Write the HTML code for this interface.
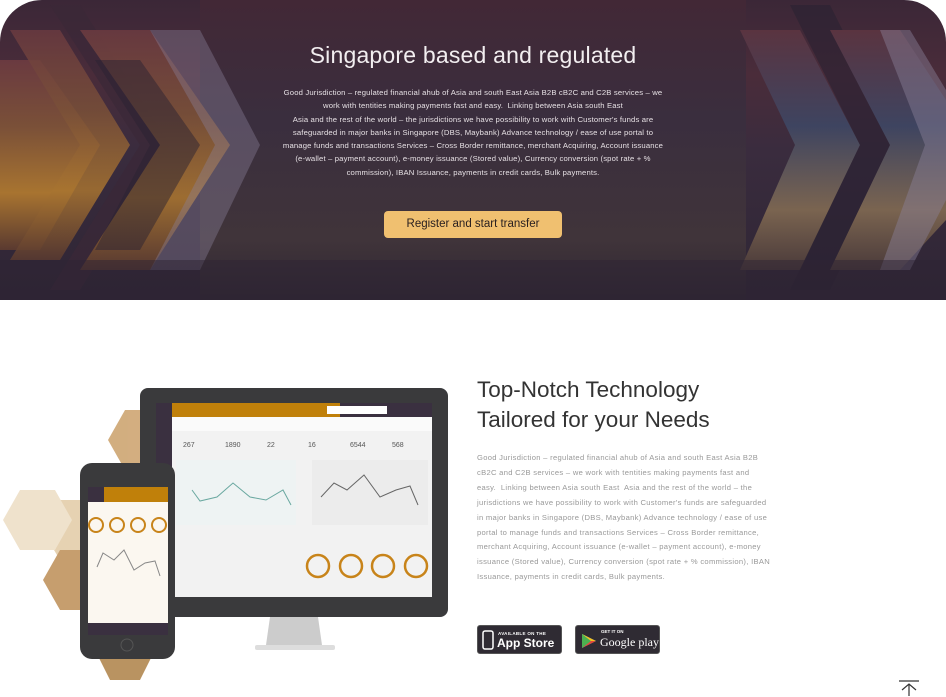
<!DOCTYPE html>
<html><head><meta charset="utf-8"><style>
*{margin:0;padding:0;box-sizing:border-box}
body{width:946px;height:697px;background:#fff;font-family:"Liberation Sans",sans-serif;overflow:hidden;position:relative}
.hero{position:absolute;left:0;top:0;width:946px;height:300px;border-radius:42px 42px 0 0;overflow:hidden;background:linear-gradient(180deg,#3b2737 0%,#4a2c3a 25%,#3a2c3e 50%,#2e2534 100%)}
.hero svg{position:absolute;left:0;top:0}
.h1{position:absolute;left:0;width:946px;top:42px;text-align:center;color:#f2eef0;font-size:23px;letter-spacing:0.2px}
.hp{position:absolute;left:278px;width:390px;top:86px;text-align:center;color:#e6e0e4;font-size:7.7px;line-height:13.3px;letter-spacing:0.15px}
.btn{position:absolute;left:384px;top:211px;width:178px;height:27px;background:#f0c070;border-radius:4px;color:#2a2020;font-size:11.5px;text-align:center;line-height:27px}
.t2{position:absolute;left:477px;top:375px;color:#333;font-size:22.5px;line-height:30px}
.p2{position:absolute;left:477px;top:451px;width:294px;color:#999;font-size:7.6px;line-height:14.9px;letter-spacing:0.3px}
.badge{position:absolute;top:625px;height:29px;background:#2f2b33;border-radius:3px;border:1px solid #555;color:#fff}
</style></head><body>
<div class="hero">
<svg width="946" height="300">
<defs>
<linearGradient id="city" x1="0" y1="0" x2="0" y2="1"><stop offset="0" stop-color="#6a3a40"/><stop offset="0.35" stop-color="#7a5038"/><stop offset="0.7" stop-color="#a87430"/><stop offset="1" stop-color="#5a3a30"/></linearGradient>
<linearGradient id="city2" x1="0" y1="0" x2="0" y2="1"><stop offset="0" stop-color="#5a3440"/><stop offset="0.4" stop-color="#3e4460"/><stop offset="0.75" stop-color="#7a6450"/><stop offset="1" stop-color="#4a3a3a"/></linearGradient>
<linearGradient id="mid" x1="0" y1="0" x2="0" y2="1"><stop offset="0" stop-color="#422836"/><stop offset="0.4" stop-color="#3a2e3e"/><stop offset="0.8" stop-color="#40343a"/><stop offset="1" stop-color="#2e2632"/></linearGradient>
</defs>
<rect x="200" y="0" width="546" height="300" fill="url(#mid)"/>
<polygon points="0,60 40,60 100,145 40,250 0,250" fill="url(#city)"/>
<polygon points="10,30 60,30 130,145 60,260 10,260 80,145" fill="url(#city)" opacity="0.85"/>
<polygon points="50,5 80,5 170,145 80,290 50,290 140,145" fill="#3a2838" opacity="0.7"/>
<polygon points="80,30 150,30 230,145 150,270 80,270 160,145" fill="url(#city)" opacity="0.9"/>
<polygon points="150,30 200,30 260,145 200,270 150,270 215,145" fill="#8a8098" opacity="0.4"/>
<polygon points="95,60 140,60 200,145 140,250 95,250 150,145" fill="#2a2232" opacity="0.5"/>
<polygon points="740,30 800,30 860,145 800,270 740,270 795,145" fill="url(#city2)"/>
<polygon points="790,5 830,5 900,145 830,290 790,290 860,145" fill="#2a2232" opacity="0.6"/>
<polygon points="830,30 900,30 946,100 946,220 900,270 830,270 890,145" fill="url(#city2)"/>
<polygon points="880,30 910,30 946,90 946,200 910,270 880,270 925,145" fill="#8a8098" opacity="0.45"/>
<rect x="0" y="260" width="946" height="40" fill="#2e2434" opacity="0.5"/>
</svg>
<div class="h1">Singapore based and regulated</div>
<div class="hp">Good Jurisdiction – regulated financial ahub of Asia and south East Asia B2B cB2C and C2B services – we work with tentities making payments fast and easy.&nbsp; Linking between Asia south East<br>Asia and the rest of the world – the jurisdictions we have possibility to work with Customer's funds are safeguarded in major banks in Singapore (DBS, Maybank) Advance technology / ease of use portal to manage funds and transactions Services – Cross Border remittance, merchant Acquiring, Account issuance (e-wallet – payment account), e-money issuance (Stored value), Currency conversion (spot rate + % commission), IBAN Issuance, payments in credit cards, Bulk payments.</div>
<div class="btn">Register and start transfer</div>
</div>

<svg style="position:absolute;left:0;top:380px" width="470" height="317">
<g fill="#c89a60" opacity="0.8">
<polygon points="125,30 160,30 178,60 160,90 125,90 108,60"/>
<polygon points="60,120 100,120 118,150 100,180 60,180 42,150" fill="#e0c8a0"/>
<polygon points="20,110 55,110 72,140 55,170 20,170 3,140" fill="#ecdcc0"/>
<polygon points="60,170 95,170 112,200 95,230 60,230 43,200" fill="#b8864a"/>
<polygon points="110,240 140,240 155,270 140,300 110,300 95,270" fill="#a8783a"/>
</g>
<rect x="140" y="8" width="308" height="229" rx="8" fill="#3a3a3c"/>
<rect x="156" y="23" width="276" height="194" fill="#f2f2f2"/>
<rect x="156" y="23" width="16" height="194" fill="#3a3040"/>
<rect x="172" y="23" width="168" height="14" fill="#c0800a"/>
<rect x="340" y="23" width="92" height="14" fill="#3a3040"/>
<rect x="327" y="26" width="60" height="8" fill="#fff"/>
<rect x="172" y="37" width="260" height="14" fill="#fafafa"/>
<g font-size="7" fill="#555"><text x="183" y="67">267</text><text x="225" y="67">1890</text><text x="267" y="67">22</text><text x="308" y="67">16</text><text x="350" y="67">6544</text><text x="392" y="67">568</text></g>
<rect x="176" y="80" width="120" height="65" fill="#eef3f3"/>
<polyline points="192,110 200,121 217,117 233,103 250,117 266,120 283,110 291,125" fill="none" stroke="#6aa8a0" stroke-width="1"/>
<rect x="312" y="80" width="116" height="65" fill="#ececec"/>
<polyline points="321,117 334,103 347,110 364,95 380,117 396,110 410,106 418,125" fill="none" stroke="#666" stroke-width="1"/>
<g fill="none" stroke="#c8841a" stroke-width="2.5"><circle cx="318" cy="186" r="11"/><circle cx="351" cy="186" r="11"/><circle cx="383" cy="186" r="11"/><circle cx="416" cy="186" r="11"/></g>
<polygon points="270,237 318,237 322,265 266,265" fill="#ccc"/>
<rect x="255" y="265" width="80" height="5" rx="2" fill="#ddd"/>
<rect x="80" y="83" width="95" height="196" rx="12" fill="#3a3a3c"/>
<rect x="88" y="107" width="80" height="136" fill="#fbf7f0"/>
<rect x="88" y="107" width="16" height="15" fill="#3a3040"/>
<rect x="104" y="107" width="64" height="15" fill="#c0800a"/>
<g fill="none" stroke="#c8841a" stroke-width="2"><circle cx="96" cy="145" r="7"/><circle cx="117" cy="145" r="7"/><circle cx="138" cy="145" r="7"/><circle cx="159" cy="145" r="7"/></g>
<polyline points="97,187 103,173 114,180 124,170 134,190 145,183 155,181 160,196" fill="none" stroke="#888" stroke-width="1"/>
<rect x="88" y="243" width="80" height="12" fill="#3a3040"/>
<circle cx="127" cy="265" r="6" fill="none" stroke="#555"/>
</svg>

<div class="t2">Top-Notch Technology<br>Tailored for your Needs</div>
<div class="p2">Good Jurisdiction – regulated financial ahub of Asia and south East Asia B2B cB2C and C2B services – we work with tentities making payments fast and easy.&nbsp; Linking between Asia south East&nbsp; Asia and the rest of the world – the jurisdictions we have possibility to work with Customer's funds are safeguarded in major banks in Singapore (DBS, Maybank) Advance technology / ease of use portal to manage funds and transactions Services – Cross Border remittance, merchant Acquiring, Account issuance (e-wallet – payment account), e-money issuance (Stored value), Currency conversion (spot rate + % commission), IBAN Issuance, payments in credit cards, Bulk payments.</div>

<div class="badge" style="left:477px;width:85px">
<svg style="position:absolute;left:4px;top:4px" width="12" height="20"><rect x="1" y="1" width="10" height="18" rx="2" fill="none" stroke="#fff" stroke-width="1.5"/></svg>
<div style="position:absolute;left:20px;top:5px;font-size:4.5px;font-weight:bold;letter-spacing:0.3px">AVAILABLE ON THE</div>
<div style="position:absolute;left:19px;top:10px;font-size:12px;font-weight:bold">App Store</div>
</div>
<div class="badge" style="left:575px;width:85px">
<svg style="position:absolute;left:5px;top:7px" width="16" height="16"><polygon points="1,1 15,8 1,15" fill="#3bc4d0"/><polygon points="1,1 10,8 1,15" fill="#4cb050"/><polygon points="10,8 15,8 1,15" fill="#e8443a"/><polygon points="10,8 1,1 15,8" fill="#f8c020"/></svg>
<div style="position:absolute;left:25px;top:3px;font-size:4.5px;font-weight:bold">GET IT ON</div>
<div style="position:absolute;left:24px;top:9px;font-size:12px;font-family:'Liberation Serif',serif">Google play</div>
</div>

<svg style="position:absolute;left:898px;top:680px" width="22" height="17"><line x1="1" y1="1" x2="21" y2="1" stroke="#333" stroke-width="1.2"/><path d="M11 16 V4 M4 10 L11 4 L18 10" fill="none" stroke="#333" stroke-width="1.2"/></svg>
</body></html>
